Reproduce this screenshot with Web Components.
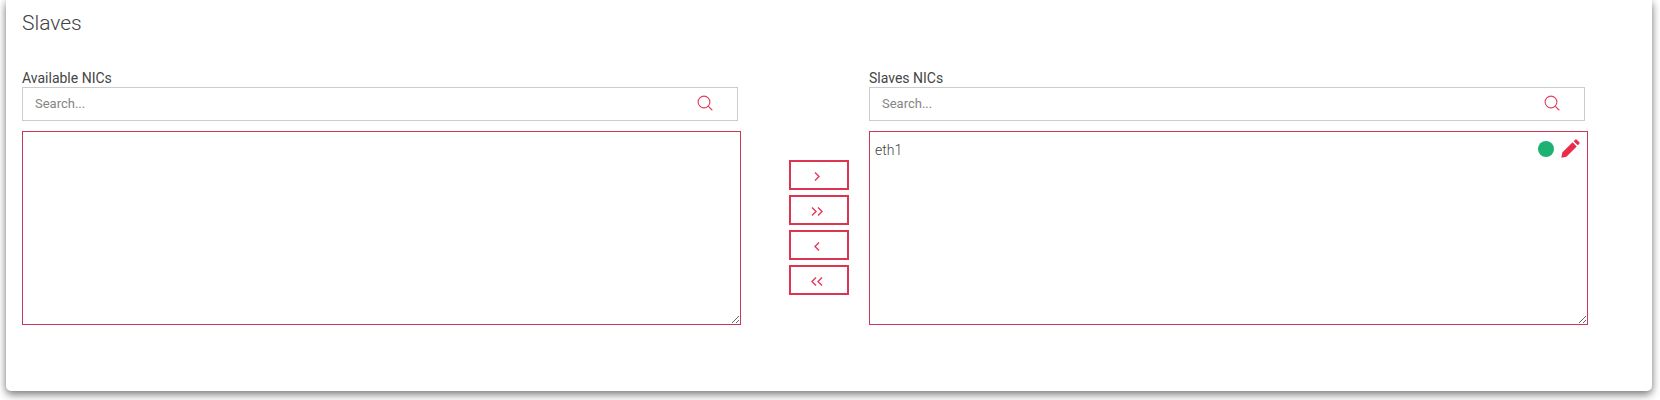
<!DOCTYPE html>
<html lang="en">
<head>
<meta charset="utf-8">
<title>Slaves</title>
<style>
html,body{margin:0;padding:0;background:#fff;height:400px;overflow:hidden}
body{font-family:Roboto,"Liberation Sans",sans-serif}
</style>
</head>
<body>
<template id="t-card">
<style>
:host{display:block;box-sizing:border-box;width:1646px;height:391px;margin-left:6px;background:#fff;border-radius:0 0 5px 5px;box-shadow:0 4px 9px rgba(0,0,0,.45),0 0 7px rgba(0,0,0,.16);padding:11px 16px 0}
h2{margin:0;font:300 21px/24px Roboto,sans-serif;color:#3f4246;height:60px}
.row{display:flex;align-items:flex-start}
</style>
<h2><slot name="title"></slot></h2>
<div class="row"><slot></slot></div>
</template>

<template id="t-list">
<style>
:host{display:block;width:719px;flex:none}
label{display:block;font:400 14px/14px Roboto,sans-serif;color:#454545;height:16px}
.search{box-sizing:border-box;width:716px;height:34px;border:1px solid #ccc;display:flex;align-items:center;justify-content:space-between;padding:0 24px 0 12px;background:#fff}
.search span{font:400 13px/16px Roboto,sans-serif;color:#858585}
.search svg{margin-bottom:2px}
svg{display:block}
.box{box-sizing:border-box;width:719px;height:194px;margin-top:10px;border:1px solid #c8385a;overflow:auto;resize:both;background:#fff;padding:0}
</style>
<label></label>
<div class="search"><span>Search...</span>
<svg width="16" height="16" viewBox="0 0 16 16" fill="none" stroke="#e0405c" stroke-width="1.1"><circle cx="7" cy="7" r="5.9"/><path d="M11.2 11.2L15 15" stroke-linecap="round"/></svg></div>
<div class="box"><slot></slot></div>
</template>

<template id="t-item">
<style>
:host{display:flex;align-items:center;justify-content:space-between;height:32px;padding:1px 7px 0 5px;box-sizing:border-box;font:300 14px/16px Roboto,sans-serif;color:#444}
.icons{display:flex;align-items:center;gap:7px}
.dot{width:16px;height:16px;border-radius:50%;background:#1db272}
svg{display:block}
span.txt{padding-top:2px}
</style>
<span class="txt"><slot></slot></span>
<span class="icons"><span class="dot"></span>
<svg width="19" height="19" viewBox="0 0 19 19"><path fill="#ec2b4b" d="M0.3 18.7L1.3 13.6L11.6 3.3L15.7 7.4L5.4 17.7ZM12.7 2.2L14.2 0.7Q15 0 15.8 0.7L18.3 3.2Q19 4 18.3 4.8L16.8 6.3Z"/></svg></span>
</template>

<template id="t-btn">
<style>
:host{display:block}
button{display:flex;align-items:center;justify-content:center;box-sizing:border-box;width:60px;height:30px;padding:2px 4px 0 0;background:#fff;border:2px solid #dc3552;border-radius:0;cursor:pointer}
svg{display:block}
</style>
<button type="button"><svg width="16" height="12" viewBox="0 0 16 12" fill="none" stroke="#e5385a" stroke-width="1.4"></svg></button>
</template>

<template id="t-moves">
<style>
:host{display:flex;flex-direction:column;gap:5px;flex:none;width:60px;margin:89px 20px 0 48px}
</style>
<slot></slot>
</template>

<nic-card>
  <span slot="title">Slaves</span>
  <nic-list label="Available NICs"></nic-list>
  <nic-moves>
    <nic-move dir="r1"></nic-move>
    <nic-move dir="r2"></nic-move>
    <nic-move dir="l1"></nic-move>
    <nic-move dir="l2"></nic-move>
  </nic-moves>
  <nic-list label="Slaves NICs"><nic-item>eth1</nic-item></nic-list>
</nic-card>

<script>
function shadow(el,id){
  var r=el.attachShadow({mode:'open'});
  r.appendChild(document.getElementById(id).content.cloneNode(true));
  return r;
}
customElements.define('nic-card',class extends HTMLElement{constructor(){super();shadow(this,'t-card');}});
customElements.define('nic-list',class extends HTMLElement{
  constructor(){super();this._r=shadow(this,'t-list');}
  connectedCallback(){this._r.querySelector('label').textContent=this.getAttribute('label');}
});
customElements.define('nic-item',class extends HTMLElement{constructor(){super();shadow(this,'t-item');}});
customElements.define('nic-moves',class extends HTMLElement{constructor(){super();shadow(this,'t-moves');}});
var P={r1:'M6 2.5L10 6.5L6 10.5',r2:'M3 2.5L7 6.5L3 10.5M9 2.5L13 6.5L9 10.5',l1:'M10 2.5L6 6.5L10 10.5',l2:'M7 2.5L3 6.5L7 10.5M13 2.5L9 6.5L13 10.5'};
customElements.define('nic-move',class extends HTMLElement{
  constructor(){super();this._r=shadow(this,'t-btn');}
  connectedCallback(){
    var d=this.getAttribute('dir');
    var s=this._r.querySelector('svg');
    var p=document.createElementNS('http://www.w3.org/2000/svg','path');
    p.setAttribute('d',P[d]);s.appendChild(p);
    this._r.querySelector('button').setAttribute('aria-label',d);
  }
});
</script>
</body>
</html>
